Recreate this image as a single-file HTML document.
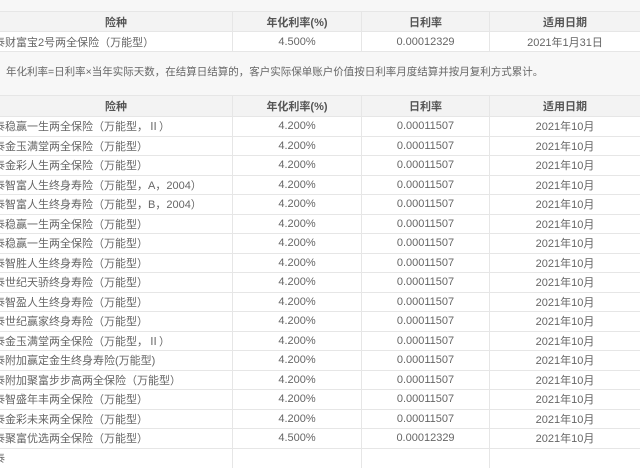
<!DOCTYPE html><html><head><meta charset="utf-8"><style>
body{margin:0;width:640px;height:456px;overflow:hidden;background:#fff;font-family:"Liberation Sans","Noto Sans CJK SC",sans-serif;font-size:11px;color:#666;position:relative}
.r{position:absolute;left:0;width:640px;display:flex;border-bottom:1px solid #e6e6e6;box-sizing:border-box;background:#fff}
.r div{box-sizing:border-box;border-right:1px solid #e6e6e6;display:flex;align-items:center;justify-content:center;height:100%;white-space:nowrap;overflow:hidden}
.r div:last-child{border-right:none}
.c1{width:233px}.c2{width:129px}.c3{width:128px}.c4{width:150px}
.r .c1.l{justify-content:flex-start}
.r .c1.l::before{content:"泰";margin-left:-6px}
.h{background:#f3f3f3;font-weight:bold;color:#555;border-top:1px solid #e6e6e6}
.note{position:absolute;left:0;top:52px;width:640px;height:43px;background:#f7f7f7;}
.note span{position:absolute;left:6px;top:12px;font-size:10.5px;color:#666}
</style></head><body>
<div style="position:absolute;top:0;left:0;width:640px;height:11px;background:#f7f7f7"></div>
<div class="r h" style="top:11px;height:21px"><div class="c1">险种</div><div class="c2">年化利率(%)</div><div class="c3">日利率</div><div class="c4">适用日期</div></div>
<div class="r" style="top:32px;height:20px"><div class="c1 l">财富宝2号两全保险（万能型）</div><div class="c2">4.500%</div><div class="c3">0.00012329</div><div class="c4">2021年1月31日</div></div>
<div class="note"><span>年化利率=日利率×当年实际天数，在结算日结算的，客户实际保单账户价值按日利率月度结算并按月复利方式累计。</span></div>
<div class="r h" style="top:95px;height:22px"><div class="c1">险种</div><div class="c2">年化利率(%)</div><div class="c3">日利率</div><div class="c4">适用日期</div></div>
<div class="r" style="top:117px;height:19.5px"><div class="c1 l">稳赢一生两全保险（万能型，Ⅱ）</div><div class="c2">4.200%</div><div class="c3">0.00011507</div><div class="c4">2021年10月</div></div>
<div class="r" style="top:136.5px;height:19.5px"><div class="c1 l">金玉满堂两全保险（万能型）</div><div class="c2">4.200%</div><div class="c3">0.00011507</div><div class="c4">2021年10月</div></div>
<div class="r" style="top:156px;height:19.5px"><div class="c1 l">金彩人生两全保险（万能型）</div><div class="c2">4.200%</div><div class="c3">0.00011507</div><div class="c4">2021年10月</div></div>
<div class="r" style="top:175.5px;height:19.5px"><div class="c1 l">智富人生终身寿险（万能型，A，2004）</div><div class="c2">4.200%</div><div class="c3">0.00011507</div><div class="c4">2021年10月</div></div>
<div class="r" style="top:195px;height:19.5px"><div class="c1 l">智富人生终身寿险（万能型，B，2004）</div><div class="c2">4.200%</div><div class="c3">0.00011507</div><div class="c4">2021年10月</div></div>
<div class="r" style="top:214.5px;height:19.5px"><div class="c1 l">稳赢一生两全保险（万能型）</div><div class="c2">4.200%</div><div class="c3">0.00011507</div><div class="c4">2021年10月</div></div>
<div class="r" style="top:234px;height:19.5px"><div class="c1 l">稳赢一生两全保险（万能型）</div><div class="c2">4.200%</div><div class="c3">0.00011507</div><div class="c4">2021年10月</div></div>
<div class="r" style="top:253.5px;height:19.5px"><div class="c1 l">智胜人生终身寿险（万能型）</div><div class="c2">4.200%</div><div class="c3">0.00011507</div><div class="c4">2021年10月</div></div>
<div class="r" style="top:273px;height:19.5px"><div class="c1 l">世纪天骄终身寿险（万能型）</div><div class="c2">4.200%</div><div class="c3">0.00011507</div><div class="c4">2021年10月</div></div>
<div class="r" style="top:292.5px;height:19.5px"><div class="c1 l">智盈人生终身寿险（万能型）</div><div class="c2">4.200%</div><div class="c3">0.00011507</div><div class="c4">2021年10月</div></div>
<div class="r" style="top:312px;height:19.5px"><div class="c1 l">世纪赢家终身寿险（万能型）</div><div class="c2">4.200%</div><div class="c3">0.00011507</div><div class="c4">2021年10月</div></div>
<div class="r" style="top:331.5px;height:19.5px"><div class="c1 l">金玉满堂两全保险（万能型，Ⅱ）</div><div class="c2">4.200%</div><div class="c3">0.00011507</div><div class="c4">2021年10月</div></div>
<div class="r" style="top:351px;height:19.5px"><div class="c1 l">附加赢定金生终身寿险(万能型)</div><div class="c2">4.200%</div><div class="c3">0.00011507</div><div class="c4">2021年10月</div></div>
<div class="r" style="top:370.5px;height:19.5px"><div class="c1 l">附加聚富步步高两全保险（万能型）</div><div class="c2">4.200%</div><div class="c3">0.00011507</div><div class="c4">2021年10月</div></div>
<div class="r" style="top:390px;height:19.5px"><div class="c1 l">智盛年丰两全保险（万能型）</div><div class="c2">4.200%</div><div class="c3">0.00011507</div><div class="c4">2021年10月</div></div>
<div class="r" style="top:409.5px;height:19.5px"><div class="c1 l">金彩未来两全保险（万能型）</div><div class="c2">4.200%</div><div class="c3">0.00011507</div><div class="c4">2021年10月</div></div>
<div class="r" style="top:429px;height:19.5px"><div class="c1 l">聚富优选两全保险（万能型）</div><div class="c2">4.500%</div><div class="c3">0.00012329</div><div class="c4">2021年10月</div></div>
<div class="r" style="top:448.5px;height:19.5px;border-bottom:none"><div class="c1 l"></div><div class="c2"></div><div class="c3"></div><div class="c4"></div></div>
</body></html>
